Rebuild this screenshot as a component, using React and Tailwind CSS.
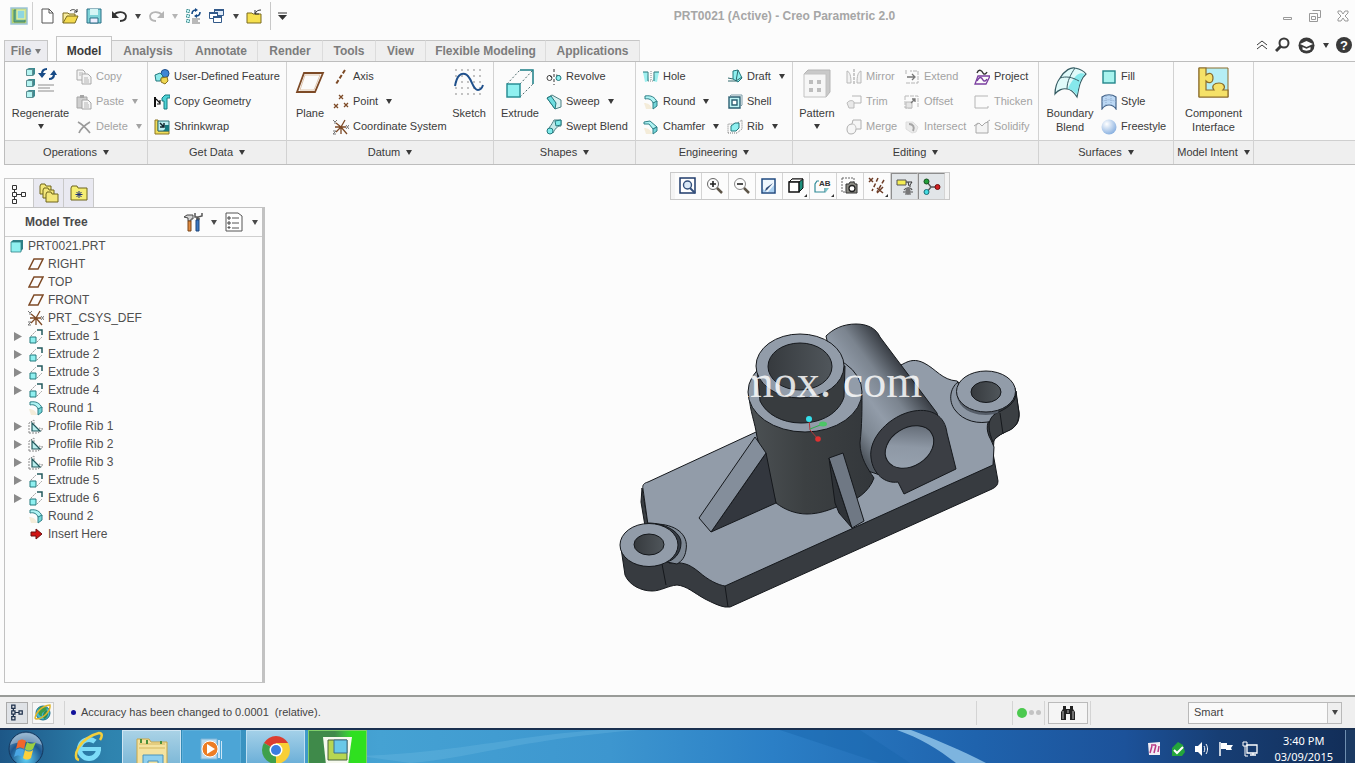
import { useState } from 'react';
import clsx from 'clsx';

/* ---------- shared bits ---------- */

const Svg = ({ w = 16, h = 16, box, children, className }) => (
  <svg
    width={w}
    height={h}
    viewBox={box || `0 0 ${w} ${h}`}
    fill="none"
    className={clsx('shrink-0', className)}
    aria-hidden="true"
  >
    {children}
  </svg>
);

const Caret = ({ className }) => (
  <Svg w={6} h={5} className={className}>
    <path d="M0 0h6L3 5z" fill="currentColor" />
  </Svg>
);

/* ---------- ribbon icons, large ---------- */

const RegenerateIcon = () => (
  <Svg w={32} h={32}>
    {[1, 12, 23].map((y) => (
      <g key={y}>
        <path d={`M2 ${y + 1}l2-1h6v6l-2 2H2z`} fill="#3d8a90" />
        <path d={`M1.500 ${y + 1.500}h6v6h-6z`} fill="#b5f4f2" stroke="#5f8f93" />
      </g>
    ))}
    <path d="M22 2c-4 0-5 2-5 5M24 12c4 0 5-2 5-5" stroke="#164a86" strokeWidth="2.200" />
    <path d="M13 6h8l-4 5zM25 8h7l-3-5z" fill="#164a86" />
    <path d="M13 18h16M13 21h12M13 24h16" stroke="#8d8d8d" />
  </Svg>
);

const PlaneIcon = () => (
  <Svg w={30} h={26}>
    <path d="M9 3h19l-8 19H2z" stroke="#7d4a26" strokeWidth="1.800" />
    <path d="M10 5h15l-6 15H5z" stroke="#d9b99b" strokeWidth="0.800" />
  </Svg>
);

const SketchIcon = () => (
  <Svg w={32} h={32}>
    {[3, 9, 15, 21, 27].map((y) =>
      [3, 9, 15, 21, 27].map((x) => <circle key={`${x}-${y}`} cx={x} cy={y} r="0.900" fill="#a8a8a8" />)
    )}
    <path d="M2 19C4 8 8 6 12 7c7 2 7 16 13 16 3 0 4-2 5-5" stroke="#1e4f8b" strokeWidth="2" />
  </Svg>
);

const ExtrudeIcon = () => (
  <Svg w={32} h={32}>
    <path d="M3 17L16 3M16 17L29 3M16 30l13-13" stroke="#4b6a6c" strokeDasharray="2 2" />
    <path d="M16 3h13v14" stroke="#1b7f86" strokeWidth="1.500" />
    <rect x="3" y="17" width="13" height="13" fill="#8ff0f0" stroke="#2b8f95" strokeWidth="1.500" />
  </Svg>
);

const PatternIcon = () => (
  <Svg w={32} h={32}>
    <path d="M3 7l4-4h22v22l-4 5z" fill="#c9c9c9" stroke="#b5b5b5" />
    <path d="M3 7h22v23H3z" fill="#f6f6f6" stroke="#c2c2c2" />
    <path d="M8 13h4v4H8zM16 13h4v4h-4zM8 21h4v4H8zM16 21h4v4h-4z" fill="#bdbdbd" />
  </Svg>
);

const BlendIcon = () => (
  <Svg w={34} h={32}>
    <path d="M7 11C12 3 18 0 22 1c5 1 9 3 11 6-6 5-7 13-9 23-4-6-7-8-10-8-4-1-9 1-12 5 0-6 2-12 5-16z" fill="#dffafa" stroke="#365c63" strokeWidth="1.200" />
    <path d="M20 13c3-5 7-8 12-6-5 5-6 11-8 21-3-4-6-6-9-6 1-4 3-6 5-9z" fill="#86e8ec" />
    <path d="M7 11c6-2 12-1 19 3M22 1c-4 6-8 13-8 21" stroke="#365c63" />
  </Svg>
);

const ComponentIcon = () => (
  <Svg w={32} h={32}>
    <path d="M1 1h29v29H1z" fill="#b5eef4" stroke="#8b6d2a" />
    <path d="M1 1h7v7c3-3 7-2 7 3s-4 6-7 3v9h8c-3-4 0-7 5-7s7 4 4 7h5v7H1z" fill="#f5e168" stroke="#8b6d2a" strokeWidth="1.200" />
  </Svg>
);

/* ---------- ribbon icons, small ---------- */

const small = {
  copy: (
    <Svg>
      <path d="M1 1h6l2 2v8H1z" fill="#f4f4f4" stroke="#a9a9a9" />
      <path d="M6 5h6l3 3v7H6z" fill="#f4f4f4" stroke="#a9a9a9" />
      <path d="M3 4h4M3 6h2M8 9h4M8 11h5M8 13h5" stroke="#b5b5b5" />
    </Svg>
  ),
  paste: (
    <Svg>
      <path d="M1 3h10v11H1z" fill="#cfcfcf" stroke="#a5a5a5" />
      <path d="M4 1h4v3H4z" fill="#a5a5a5" />
      <path d="M6 6h6l3 3v6H6z" fill="#f6f6f6" stroke="#a5a5a5" />
      <path d="M8 9h4M8 11h5M8 13h5" stroke="#b5b5b5" />
    </Svg>
  ),
  del: (
    <Svg>
      <path d="M2 3c4 2 8 6 12 11M14 3C9 6 5 9 3 14" stroke="#9a9a9a" strokeWidth="1.700" />
    </Svg>
  ),
  udf: (
    <Svg>
      <circle cx="11" cy="4.500" r="4" fill="#3f86d4" stroke="#1d4d88" />
      <path d="M1 6l5-2 3 3-3 5H2z" fill="#8eeaea" stroke="#22787d" />
      <path d="M7 9l6-1 1 4-3 3-4-2z" fill="#f0d851" stroke="#8a7320" />
    </Svg>
  ),
  copyGeom: (
    <Svg>
      <path d="M1 3v10" stroke="#111" strokeWidth="2" />
      <path d="M2 5l4 4M6 6v4H3" stroke="#111" strokeWidth="1.200" />
      <path d="M8 4l3-3h5v3h-3v11h-3V7H8z" fill="#4fd3d6" stroke="#167a80" />
    </Svg>
  ),
  shrink: (
    <Svg>
      <path d="M1 1h3v11h11v3H1z" fill="#f0dd5a" stroke="#8b7522" />
      <path d="M4 2h11v10H4z" fill="#bdeef0" stroke="#2a6f74" />
      <path d="M6 4l4 4M10 4v4H6" stroke="#10262e" strokeWidth="1.500" />
      <path d="M11 6h4v6h-6l2-2z" fill="#167a80" />
    </Svg>
  ),
  axis: (
    <Svg>
      <path d="M12 1L3 15" stroke="#7d4a26" strokeWidth="2" strokeDasharray="4 2" />
    </Svg>
  ),
  point: (
    <Svg>
      <path d="M6 1l4 4M10 1L6 5M1 10l4 4M5 10l-4 4M11 9l4 4M15 9l-4 4" stroke="#7d4a26" strokeWidth="1.300" />
    </Svg>
  ),
  csys: (
    <Svg>
      <path d="M8 8l4-7M8 8L3 4M8 8l6 7M8 8l-5 5M2 8h11M8 8v7" stroke="#7d4a26" strokeWidth="1.300" />
      <path d="M0 1l2 2 2-2M2 3v2M13 6l3 4M16 6l-3 4M0 12h3l-3 3h3" stroke="#777" />
    </Svg>
  ),
  revolve: (
    <Svg>
      <path d="M8 0v16" stroke="#333" strokeDasharray="3 2" />
      <circle cx="3.500" cy="9" r="2.500" stroke="#444" />
      <path d="M3 6l3 3M10 6l4 1" stroke="#444" />
      <circle cx="12.500" cy="9" r="2.500" fill="#8ff0f0" stroke="#22787d" />
    </Svg>
  ),
  sweep: (
    <Svg>
      <path d="M1 4l5-3 9 5v7l-6 2z" fill="#d7f0f0" stroke="#4c7f83" />
      <path d="M1 4l4-2 5 7-1 6z" fill="#6edde0" stroke="#22787d" />
    </Svg>
  ),
  sweptBlend: (
    <Svg>
      <path d="M3 9c3-4 4-6 5-8h7v6c-4 0-6 3-8 7z" fill="#c5e9ea" stroke="#4c7f83" />
      <path d="M9 2l6-1v5l-5 1z" fill="#7feaea" stroke="#22787d" />
      <circle cx="4" cy="12" r="3" fill="#7feaea" stroke="#22787d" />
    </Svg>
  ),
  hole: (
    <Svg>
      <path d="M0 3h4l2 9-4 1zM12 3h4l-2 10-4-1z" fill="#9defef" />
      <path d="M0 3h5v9M16 3h-5v9" stroke="#22787d" />
      <path d="M5 12h6M8 2v9" stroke="#888" strokeDasharray="1 1" />
    </Svg>
  ),
  round: (
    <Svg>
      <path d="M1 9c4 0 7 2 8 6H3z" fill="#f4ecd9" />
      <path d="M2 2c6-1 10 1 12 6l-4 1C9 6 6 4 2 5z" fill="#aef3f3" stroke="#2f8087" />
      <path d="M14 7v5l-4 3V9z" fill="#74d6da" stroke="#2f8087" />
    </Svg>
  ),
  chamfer: (
    <Svg>
      <path d="M1 9c4 0 7 2 8 6H3z" fill="#f4ecd9" />
      <path d="M1 3l6-1 7 6-4 2-4-5H1z" fill="#aef3f3" stroke="#2f8087" />
      <path d="M14 8v4l-4 3v-5z" fill="#74d6da" stroke="#2f8087" />
    </Svg>
  ),
  draft: (
    <Svg>
      <path d="M6 2l5-1 4 8-4 4-5-3z" fill="#8ff0f0" stroke="#22787d" />
      <path d="M1 12h8l6-4M1 9l5 1M9 12l2-11" stroke="#30696d" />
    </Svg>
  ),
  shell: (
    <Svg>
      <path d="M2 3h11v11H2z" fill="#bff5f5" stroke="#2b5f72" strokeWidth="1.400" />
      <path d="M5 6h5v5H5z" fill="#fff" stroke="#2b5f72" strokeWidth="1.400" />
      <path d="M2 3l2-2h11v10l-2 2" stroke="#7c9ca8" />
    </Svg>
  ),
  rib: (
    <Svg>
      <path d="M1 14h9l5-4V1L9 5H1z" stroke="#777" strokeDasharray="1 1" />
      <path d="M4 12V7l4-3h4v5l-3 3z" fill="#8ff0f0" stroke="#22787d" />
    </Svg>
  ),
  mirror: (
    <Svg>
      <path d="M8 0v16" stroke="#999" strokeDasharray="3 1" />
      <path d="M1 2c3 1 4 5 4 12H1zM15 2c-3 1-4 5-4 12h4z" stroke="#b9b9b9" fill="#f2f2f2" />
    </Svg>
  ),
  trim: (
    <Svg>
      <path d="M1 9c2-3 6-3 7-1v6H3z" fill="#e9e9e9" stroke="#bbb" />
      <path d="M6 2h9v7H8" stroke="#b5b5b5" />
    </Svg>
  ),
  merge: (
    <Svg>
      <path d="M7 1h8v9h-5c0 3-2 5-5 5s-4-2-4-5 2-5 5-5z" fill="#f6f6f6" stroke="#b0b0b0" />
      <path d="M6 5c3 0 4 2 4 5" stroke="#c5c5c5" />
    </Svg>
  ),
  extend: (
    <Svg>
      <path d="M2 1v4M2 14h12V2H6" stroke="#b5b5b5" strokeDasharray="4 1" />
      <path d="M3 8h7M8 5l3 3-3 3" stroke="#777" strokeWidth="1.300" />
    </Svg>
  ),
  offset: (
    <Svg>
      <path d="M1 2h13v12M1 2v12h8" stroke="#b9b9b9" strokeDasharray="4 1" />
      <path d="M2 8h6v6H2z" fill="#e5e5e5" stroke="#bbb" />
      <path d="M7 9l4-4M8 5h3v3" stroke="#777" strokeWidth="1.300" />
    </Svg>
  ),
  intersect: (
    <Svg>
      <path d="M2 3h7l5 5-2 5-4 1-6-4z" fill="#ebebeb" stroke="#dedede" />
      <path d="M5 5c4 0 6 3 4 7" stroke="#a5a5a5" strokeWidth="2" />
    </Svg>
  ),
  project: (
    <Svg>
      <path d="M3 4c2-5 5-2 6 0s3 1 4-1" stroke="#333" strokeWidth="1.400" />
      <path d="M4 7h12l-4 8H1z" stroke="#7b3fa0" strokeWidth="1.300" />
      <path d="M3 12c3-6 5-3 6-1s3 1 4-1" stroke="#7b3fa0" strokeWidth="1.500" />
    </Svg>
  ),
  thicken: (
    <Svg>
      <path d="M1 2h13M1 2v12h13M14 12v2" stroke="#b5b5b5" />
    </Svg>
  ),
  solidify: (
    <Svg>
      <path d="M2 14V6l3-2 3 3 3-3 3-1v11z" stroke="#a9a9a9" fill="#f4f4f4" />
      <path d="M0 7l4-3M13 3l3-2" stroke="#a9a9a9" />
    </Svg>
  ),
  fill: (
    <Svg>
      <rect x="2" y="2" width="12" height="12" fill="#a8f3ee" stroke="#23858a" strokeWidth="1.400" />
    </Svg>
  ),
  style: (
    <Svg>
      <path d="M1 3c4-3 10-3 14 0v12c-2-3-4-4-7-4s-5 1-7 4z" fill="#bcd8f4" stroke="#44648a" strokeWidth="1.200" />
      <path d="M5 2v9M10 2v9M1 8c4-3 10-3 14 0" stroke="#8fabcc" strokeDasharray="1 1" />
    </Svg>
  ),
  freestyle: (
    <Svg>
      <defs>
        <radialGradient id="ball" cx="0.350" cy="0.300" r="0.800">
          <stop offset="0" stopColor="#fff" />
          <stop offset="1" stopColor="#7ea9dd" />
        </radialGradient>
      </defs>
      <circle cx="8" cy="8" r="7.500" fill="url(#ball)" />
    </Svg>
  ),
};

/* ---------- ribbon ---------- */

const SmallButton = ({ icon, label, caret, off }) => (
  <button
    type="button"
    disabled={off}
    className={clsx('flex h-[25px] items-center whitespace-nowrap', off ? 'text-[#a3a3a3]' : 'text-[#3a3a3a]')}
  >
    {small[icon]}
    <span className="ml-1">{label}</span>
    {caret && <Caret className="ml-2" />}
  </button>
);

const BigButton = ({ icon, lines, caret, width }) => (
  <button type="button" className={clsx('flex flex-col items-center pt-0.5 text-[#3a3a3a]', width)}>
    <span className="mb-1.5 flex h-[34px] items-center">{icon}</span>
    {lines.map((line) => (
      <span key={line} className="leading-[14px]">{line}</span>
    ))}
    {caret && <Caret className="mt-1" />}
  </button>
);

const Column = ({ items, width }) => (
  <div className={clsx('flex flex-col items-start', width)}>
    {items.map((item) => (
      <SmallButton key={item.label} {...item} />
    ))}
  </div>
);

const Group = ({ title, width, children }) => (
  <section className={clsx('flex shrink-0 flex-col border-r border-[#d2d2d2]', width)}>
    <div className="flex h-[78px] pt-0.5">{children}</div>
    <button
      type="button"
      className="flex h-6 items-center justify-center gap-1.5 whitespace-nowrap border-t border-[#cfcfcf] bg-[#efefef] text-[#3a3a3a]"
    >
      {title}
      <Caret />
    </button>
  </section>
);

const Ribbon = () => (
  <div className="ml-1 flex border-y border-l border-[#bdbdbd] bg-[#fbfbfb] text-[11px]">
    <Group title="Operations" width="w-[143px]">
      <BigButton icon={<RegenerateIcon />} lines={['Regenerate']} caret width="w-[71px]" />
      <Column
        items={[
          { icon: 'copy', label: 'Copy', off: true },
          { icon: 'paste', label: 'Paste', caret: true, off: true },
          { icon: 'del', label: 'Delete', caret: true, off: true },
        ]}
      />
    </Group>
    <Group title="Get Data" width="w-[139px]">
      <Column
        width="pl-1.5"
        items={[
          { icon: 'udf', label: 'User-Defined Feature' },
          { icon: 'copyGeom', label: 'Copy Geometry' },
          { icon: 'shrink', label: 'Shrinkwrap' },
        ]}
      />
    </Group>
    <Group title="Datum" width="w-[207px]">
      <BigButton icon={<PlaneIcon />} lines={['Plane']} width="w-[46px]" />
      <Column
        width="w-[113px]"
        items={[
          { icon: 'axis', label: 'Axis' },
          { icon: 'point', label: 'Point', caret: true },
          { icon: 'csys', label: 'Coordinate System' },
        ]}
      />
      <BigButton icon={<SketchIcon />} lines={['Sketch']} width="w-[46px]" />
    </Group>
    <Group title="Shapes" width="w-[142px]">
      <BigButton icon={<ExtrudeIcon />} lines={['Extrude']} width="w-[52px]" />
      <Column
        items={[
          { icon: 'revolve', label: 'Revolve' },
          { icon: 'sweep', label: 'Sweep', caret: true },
          { icon: 'sweptBlend', label: 'Swept Blend' },
        ]}
      />
    </Group>
    <Group title="Engineering" width="w-[157px]">
      <Column
        width="w-[91px] pl-[7px]"
        items={[
          { icon: 'hole', label: 'Hole' },
          { icon: 'round', label: 'Round', caret: true },
          { icon: 'chamfer', label: 'Chamfer', caret: true },
        ]}
      />
      <Column
        items={[
          { icon: 'draft', label: 'Draft', caret: true },
          { icon: 'shell', label: 'Shell' },
          { icon: 'rib', label: 'Rib', caret: true },
        ]}
      />
    </Group>
    <Group title="Editing" width="w-[246px]">
      <BigButton icon={<PatternIcon />} lines={['Pattern']} caret width="w-[48px]" />
      <Column
        width="w-[63px] pl-[5px]"
        items={[
          { icon: 'mirror', label: 'Mirror', off: true },
          { icon: 'trim', label: 'Trim', off: true },
          { icon: 'merge', label: 'Merge', off: true },
        ]}
      />
      <Column
        width="w-[70px]"
        items={[
          { icon: 'extend', label: 'Extend', off: true },
          { icon: 'offset', label: 'Offset', off: true },
          { icon: 'intersect', label: 'Intersect', off: true },
        ]}
      />
      <Column
        items={[
          { icon: 'project', label: 'Project' },
          { icon: 'thicken', label: 'Thicken', off: true },
          { icon: 'solidify', label: 'Solidify', off: true },
        ]}
      />
    </Group>
    <Group title="Surfaces" width="w-[135px]">
      <BigButton icon={<BlendIcon />} lines={['Boundary', 'Blend']} width="w-[62px]" />
      <Column
        items={[
          { icon: 'fill', label: 'Fill' },
          { icon: 'style', label: 'Style' },
          { icon: 'freestyle', label: 'Freestyle' },
        ]}
      />
    </Group>
    <Group title="Model Intent" width="w-[80px]">
      <BigButton icon={<ComponentIcon />} lines={['Component', 'Interface']} width="w-full" />
    </Group>
    <div className="flex flex-1 flex-col justify-end">
      <div className="h-6 border-t border-[#cfcfcf] bg-[#efefef]" />
    </div>
  </div>
);

/* ---------- title bar ---------- */

const CreoLogo = ({ size = 18 }) => (
  <Svg w={size} h={size} box="0 0 18 18">
    <path d="M1 1h16v16H1z" fill="#b4d36e" stroke="#9cc4d8" strokeWidth="1.500" />
    <path d="M4 3h11v12H4z" fill="#5fa88a" stroke="#4f8a68" />
    <path d="M7 3h8v9H7z" fill="#8fd6e0" stroke="#e2ee9a" strokeWidth="1.500" />
  </Svg>
);

const Tool = ({ label, children }) => (
  <button type="button" aria-label={label} className="flex h-6 items-center justify-center">
    {children}
  </button>
);

const TitleBar = () => (
  <header className="flex h-8 items-center pr-[5px] text-[#444]">
    <div className="flex items-center pl-2.5">
      <CreoLogo />
      <span className="ml-1 mr-1.5 h-7 w-px bg-[#d0d0d0]" />
      <div className="flex items-center gap-[7px]">
        <Tool label="New">
          <Svg>
            <path d="M3 1h7l4 4v10H3z" fill="#fff" stroke="#555" />
            <path d="M10 1v4h4" stroke="#555" />
          </Svg>
        </Tool>
        <Tool label="Open">
          <Svg w={17}>
            <path d="M1 15V5h5l1 1h6v3" fill="#f8eda0" stroke="#7a6a1e" />
            <path d="M1 15l4-7h11l-3 7z" fill="#f3da4f" stroke="#7a6a1e" />
            <path d="M8 3c2-2 5-2 7 1M15 1v3h-3" stroke="#333" />
          </Svg>
        </Tool>
        <Tool label="Save">
          <Svg>
            <path d="M1 1h14v14H1z" fill="#7fd3d8" stroke="#2a6f86" />
            <path d="M4 1h8v6H4z" fill="#d5f5f5" />
            <path d="M4 10h8v5H4z" fill="#eef" stroke="#2a6f86" />
          </Svg>
        </Tool>
        <Tool label="Undo">
          <Svg w={17} className="ml-0.5">
            <path d="M3 7c3-4 11-4 12 1 0 4-3 5-6 5" stroke="#333" strokeWidth="1.800" />
            <path d="M1 3v7h7z" fill="#333" />
          </Svg>
          <Caret className="ml-[7px]" />
        </Tool>
        <Tool label="Redo">
          <Svg w={17}>
            <path d="M14 7C11 3 3 3 2 8c0 4 3 5 6 5" stroke="#b5b5b5" strokeWidth="1.800" />
            <path d="M16 3v7H9z" fill="#b5b5b5" />
          </Svg>
          <Caret className="ml-[7px] text-[#b5b5b5]" />
        </Tool>
        <Tool label="Regenerate model">
          <Svg>
            <path d="M1.500 1.500h3v3h-3zM1.500 6.500h3v3h-3zM1.500 11.500h3v3h-3z" fill="#bff5f5" stroke="#4a9094" strokeDasharray="2 1" />
            <path d="M7 6c0-3 2-4 4-4M15 4c0 3-2 4-4 4" stroke="#164a86" strokeWidth="1.600" />
            <path d="M10 0l3 2-3 2zM12 6l-3 2 3 2z" fill="#164a86" />
            <path d="M7 11h8M7 13h6M7 15h8" stroke="#777" />
          </Svg>
        </Tool>
        <Tool label="Windows">
          <Svg>
            <path d="M6.500 1.500h9v6h-9z" fill="#dfeaf7" stroke="#335a8a" />
            <path d="M1.500 4.500h8v6h-8z" fill="#fff" stroke="#335a8a" />
            <path d="M5.500 8.500h8v6h-8z" fill="#fff" stroke="#335a8a" />
            <path d="M6 2h10M1 5h9M5 9h9" stroke="#335a8a" strokeWidth="2" />
          </Svg>
          <Caret className="ml-[9px]" />
        </Tool>
        <Tool label="Close window">
          <Svg w={17}>
            <path d="M1 15V5h5l1 1h8v9z" fill="#f6e04e" stroke="#7a6a1e" />
            <path d="M9 6c1-3 3-4 6-4M9 2v4h4" stroke="#333" />
          </Svg>
        </Tool>
        <span className="h-7 w-px bg-[#c8c8c8]" />
        <Tool label="Customize">
          <Svg w={9} h={9}>
            <path d="M0 1h9" stroke="#333" />
            <path d="M0 3h9L4.500 8z" fill="#333" />
          </Svg>
        </Tool>
      </div>
    </div>
    <h1 className="flex-1 text-center text-[12px] font-bold text-[#a6a6a6]">PRT0021 (Active) - Creo Parametric 2.0</h1>
    <div className="flex items-center gap-[14px] text-[#999]">
      <Tool label="Minimize">
        <Svg w={12} h={14}>
          <path d="M1.500 8.500h8v2h-8z" stroke="currentColor" />
        </Svg>
      </Tool>
      <Tool label="Restore">
        <Svg w={14} h={14}>
          <path d="M4.500 1.500h8v7h-3M1.500 4.500h8v8h-8z" stroke="currentColor" />
          <path d="M3.500 7.500h4v3h-4z" stroke="currentColor" />
        </Svg>
      </Tool>
      <Tool label="Close">
        <Svg w={14} h={14}>
          <path d="M2 2h3l2 3 2-3h3v2L9 7l3 3v2H9L7 9l-2 3H2v-2l3-3-3-3z" stroke="currentColor" />
        </Svg>
      </Tool>
    </div>
  </header>
);

const TABS = [
  ['Analysis', 'w-[73px]'],
  ['Annotate', 'w-[73px]'],
  ['Render', 'w-[65px]'],
  ['Tools', 'w-[53px]'],
  ['View', 'w-[50px]'],
  ['Flexible Modeling', 'w-[120px]'],
  ['Applications', 'w-[94px]'],
];

const TabRow = () => (
  <nav className="flex h-[29px] items-end justify-between pl-1 pr-[3px] text-[12px] font-bold text-[#7c7c7c]">
    <div className="flex items-end">
      <button type="button" className="mr-2 flex h-[21px] w-11 items-center justify-center gap-1 border border-b-0 border-[#c6c6c6] bg-[#ececf0]">
        File
        <Caret />
      </button>
      <button type="button" className="-mb-px h-[26px] w-14 border border-b-0 border-[#c6c6c6] bg-[#fbfbfb] pt-0.5 text-[#3a3a3a]">
        Model
      </button>
      {TABS.map(([name, width]) => (
        <button
          key={name}
          type="button"
          className={clsx('h-[21px] border-r border-t border-t-[#c6c6c6] border-r-[#dcdcdc] bg-[#efefef]', width)}
        >
          {name}
        </button>
      ))}
    </div>
    <div className="flex h-full items-center gap-[7px] pb-[3px] text-[#3a3a3a]">
      <Tool label="Minimize the ribbon">
        <Svg w={12} h={12}>
          <path d="M1 6l5-4 5 4M1 10l5-4 5 4" stroke="currentColor" />
        </Svg>
      </Tool>
      <Tool label="Command search">
        <Svg>
          <circle cx="9" cy="6" r="4.500" stroke="currentColor" strokeWidth="2" />
          <path d="M6 9l-5 5" stroke="currentColor" strokeWidth="3" />
        </Svg>
      </Tool>
      <Tool label="Learning connector">
        <Svg w={17} h={17}>
          <circle cx="8.500" cy="8.500" r="8" fill="currentColor" />
          <path d="M2 7l6.500-3L15 7l-6.500 3z" fill="#fff" />
          <path d="M4.500 10v2.500c2 1.500 6 1.500 8 0V10l-4 1.800z" fill="#fff" />
        </Svg>
        <Caret className="ml-2" />
      </Tool>
      <button type="button" aria-label="Help" className="flex h-4 w-4 items-center justify-center rounded-full bg-[#3a3a3a] text-[13px] leading-none text-white">
        ?
      </button>
    </div>
  </nav>
);

/* ---------- model tree ---------- */

const treeIcons = {
  part: (
    <Svg w={14} h={14}>
      <path d="M1 3l2-2h10v9l-3 3H1z" fill="#2f8087" />
      <path d="M1 3h10v10H1z" fill="#8ff0f0" stroke="#2f8087" strokeWidth="0.800" />
    </Svg>
  ),
  plane: (
    <Svg>
      <path d="M6 3h9l-5 10H1z" stroke="#7d4a26" strokeWidth="1.500" />
    </Svg>
  ),
  csys: small.csys,
  extrude: (
    <Svg>
      <path d="M3 8l5-5M9 14l5-5" stroke="#999" strokeDasharray="2 1" />
      <path d="M9 2h5v5" stroke="#22595d" strokeWidth="1.500" />
      <path d="M2 9h6v6H2z" fill="#8ff0f0" stroke="#22787d" />
    </Svg>
  ),
  round: small.round,
  rib: (
    <Svg>
      <path d="M1 15h9l5-4-4-1M1 15V5l5-3v4" stroke="#888" strokeDasharray="2 1" />
      <path d="M4 5v8h8z" fill="#b9eeee" stroke="#22595d" strokeWidth="1.200" />
    </Svg>
  ),
  insert: (
    <Svg>
      <path d="M3 6h5V3l6 5-6 5v-3H3z" fill="#d01313" stroke="#6b1010" />
    </Svg>
  ),
};

const TREE = [
  { name: 'RIGHT', icon: 'plane' },
  { name: 'TOP', icon: 'plane' },
  { name: 'FRONT', icon: 'plane' },
  { name: 'PRT_CSYS_DEF', icon: 'csys' },
  { name: 'Extrude 1', icon: 'extrude', open: false },
  { name: 'Extrude 2', icon: 'extrude', open: false },
  { name: 'Extrude 3', icon: 'extrude', open: false },
  { name: 'Extrude 4', icon: 'extrude', open: false },
  { name: 'Round 1', icon: 'round' },
  { name: 'Profile Rib 1', icon: 'rib', open: false },
  { name: 'Profile Rib 2', icon: 'rib', open: false },
  { name: 'Profile Rib 3', icon: 'rib', open: false },
  { name: 'Extrude 5', icon: 'extrude', open: false },
  { name: 'Extrude 6', icon: 'extrude', open: false },
  { name: 'Round 2', icon: 'round' },
  { name: 'Insert Here', icon: 'insert' },
];

const HierarchyIcon = () => (
  <Svg w={16} h={20}>
    <path d="M1.500 1.500h4v4h-4zM1.500 8.500h4v4h-4zM1.500 15.500h4v4h-4zM10.500 8.500h4v4h-4zM3.500 5.500v3M3.500 12.500v3M5.500 10.500h5" stroke="currentColor" />
  </Svg>
);

const ModelTree = () => (
  <aside className="flex w-[265px] shrink-0 flex-col pb-3 pl-1 pt-[13px]">
    <div className="flex">
      <button type="button" aria-label="Model tree" className="-mb-px flex h-[30px] w-[30px] items-center justify-center border border-b-0 border-[#c9c9c9] bg-[#fbfbfb] text-[#333]">
        <HierarchyIcon />
      </button>
      <button type="button" aria-label="Folder browser" className="flex h-[29px] w-[30px] items-center justify-center border-r border-t border-[#c9c9c9] bg-[#e9e9f1]">
        <Svg w={20} h={20}>
          <path d="M1 11V3l1-2h4l1 2h5v8z" fill="#f3e67a" stroke="#6f651d" />
          <path d="M4 15V7l1-2h4l1 2h5v8z" fill="#f3e67a" stroke="#6f651d" />
          <path d="M7 19v-8l1-2h4l1 2h6v8z" fill="#f3e67a" stroke="#6f651d" />
        </Svg>
      </button>
      <button type="button" aria-label="Favorites" className="flex h-[29px] w-[30px] items-center justify-center border-r border-t border-[#c9c9c9] bg-[#e9e9f1]">
        <Svg w={18} h={16}>
          <path d="M1 15V3l1-2h5l1 2h9v12z" fill="#f5ee74" stroke="#6f651d" />
          <path d="M9 6v7M5.500 9.500h7M6.500 7l5 5M11.500 7l-5 5" stroke="#1d2f7a" />
        </Svg>
      </button>
    </div>
    <div className="flex-1 border border-r-[3px] border-[#c2c2c2]">
      <div className="flex h-[29px] items-center border-b border-[#cfcfcf] pl-5 pr-1 text-[#4a4a4a]">
        <h2 className="flex-1 text-[12px] font-bold">Model Tree</h2>
        <button type="button" aria-label="Settings" className="mr-2 flex items-center gap-2">
          <Svg w={20} h={20}>
            <path d="M1 5l3-2h6v4H8v2H5V6z" fill="#d5d5d5" stroke="#444" />
            <path d="M5 9h3v10H5z" fill="#e08b42" stroke="#7a4416" />
            <path d="M12 1v4h2l1 3v-3l4-1V1M13 7h4" stroke="#555" strokeWidth="1.500" />
            <path d="M13 8h3v11h-3z" fill="#3a78c2" stroke="#1d447a" />
          </Svg>
          <Caret />
        </button>
        <button type="button" aria-label="Show" className="flex items-center gap-[9px]">
          <Svg w={18} h={20}>
            <path d="M1 1h12l4 3v15H1z" fill="#fff" stroke="#555" />
            <path d="M3 5h2v2H3zM3 10h2v2H3zM3 15h2v1H3z" stroke="#444" />
            <path d="M7 6h7M7 11h7M7 16h7" stroke="#555" />
          </Svg>
          <Caret />
        </button>
      </div>
      <ul className="text-[12px] text-[#4f4f4f]">
        <li className="flex h-[18px] items-center gap-1 pl-[5px]">
          {treeIcons.part}
          PRT0021.PRT
        </li>
        {TREE.map((node) => (
          <li key={node.name} className="flex h-[18px] items-center pl-[9px]">
            <span className="w-[14px]">
              {node.open === false && (
                <Svg w={8} h={9}>
                  <path d="M0 0l8 4.500L0 9z" fill="#8b8b8b" />
                </Svg>
              )}
            </span>
            {treeIcons[node.icon]}
            <span className="ml-1">{node.name}</span>
          </li>
        ))}
      </ul>
    </div>
  </aside>
);

/* ---------- graphics area ---------- */

const VIEW_TOOLS = [
  {
    label: 'Refit',
    icon: (
      <>
        <path d="M1 1h15v15H1z" fill="#fff" stroke="#1f3b6b" strokeWidth="1.500" />
        <circle cx="8.500" cy="8" r="4" fill="#dbe9f7" stroke="#34507c" strokeWidth="1.400" />
        <path d="M11 11l5 5" stroke="#34507c" strokeWidth="2" />
      </>
    ),
  },
  {
    label: 'Zoom in',
    icon: (
      <>
        <circle cx="7" cy="7" r="5.500" stroke="#666" />
        <path d="M4 7h6M7 4v6" stroke="#222" strokeWidth="1.600" />
        <path d="M11 11l5 5" stroke="#5d5548" strokeWidth="2.500" />
      </>
    ),
  },
  {
    label: 'Zoom out',
    icon: (
      <>
        <circle cx="7" cy="7" r="5.500" stroke="#888" />
        <path d="M4 7h6" stroke="#222" strokeWidth="1.600" />
        <path d="M11 11l5 5" stroke="#5d5548" strokeWidth="2.500" />
      </>
    ),
  },
  {
    label: 'Repaint',
    icon: (
      <>
        <path d="M2 2h13v14H2z" fill="#eef6fd" stroke="#1f4a80" strokeWidth="1.500" />
        <path d="M3 15v-3l4 3zM14 8v7H8z" fill="#a9cff0" />
        <path d="M13 6l-6 7-2 1 1-3z" fill="#34507c" />
      </>
    ),
  },
  {
    label: 'Display style',
    more: true,
    icon: (
      <>
        <path d="M2 5l3-3h11v9l-4 4z" fill="#1d8f7c" stroke="#111" />
        <path d="M2 5l3-3h11l-4 3z" fill="#fff" stroke="#111" />
        <path d="M2 5h10v10H2z" fill="#fff" stroke="#111" strokeWidth="1.500" />
      </>
    ),
  },
  {
    label: 'Saved orientations',
    more: true,
    icon: (
      <>
        <path d="M5 4H3L1 7v8h10v-4" stroke="#2f8a96" strokeWidth="1.200" />
        <text x="5" y="9" fontSize="8" fontWeight="bold" fontFamily="Liberation Sans, sans-serif" fill="#333">AB</text>
        <path d="M12 11h3l-3 4z" fill="#7ac8d0" />
      </>
    ),
  },
  {
    label: 'View manager',
    icon: (
      <>
        <path d="M1 1h12v4M1 1v14h3" stroke="#666" strokeDasharray="2 1" />
        <path d="M5 7h3l1-2h4l1 2h2v9H5z" fill="#8b8b84" stroke="#333" />
        <circle cx="11" cy="11.500" r="3" fill="#fff" stroke="#222" strokeWidth="1.300" />
      </>
    ),
  },
  {
    label: 'Datum display filters',
    more: true,
    icon: (
      <>
        <path d="M1 1l4 4M5 1L1 5M9 11l6 5M15 10l-6 6" stroke="#6d3c26" strokeWidth="1.500" />
        <path d="M10 1L4 14M16 3l-7 12" stroke="#6d3c26" strokeWidth="1.500" strokeDasharray="4 2" />
      </>
    ),
  },
  {
    label: 'Annotation display',
    pressed: true,
    icon: (
      <>
        <path d="M1 2h9v5H1z" fill="#f5ee54" stroke="#555" />
        <path d="M10 4h6l-2 3v2M12 4l1 4" stroke="#333" />
        <path d="M8 12c2-3 7-3 8 0M7 14h10M9 16h6" stroke="#555" strokeWidth="1.200" />
        <ellipse cx="12" cy="13" rx="2.500" ry="3.500" fill="#777" />
      </>
    ),
  },
  {
    label: 'Spin center',
    pressed: true,
    icon: (
      <>
        <path d="M4 4l4 5-4 5M8 9h6" stroke="#555" strokeWidth="1.300" />
        <circle cx="3.500" cy="3.500" r="2.500" fill="#22a03a" stroke="#134d1d" />
        <circle cx="3.500" cy="14" r="2.500" fill="#44dbe2" stroke="#1c6c76" />
        <circle cx="14.500" cy="9" r="2.500" fill="#d32121" stroke="#6f1212" />
      </>
    ),
  },
];

const ViewToolbar = () => (
  <div className="flex h-7 items-center border border-[#c9c9c9] bg-[#f4f4f4] px-1">
    {VIEW_TOOLS.map(({ label, icon, pressed, more }) => (
      <button
        key={label}
        type="button"
        aria-label={label}
        className={clsx(
          'relative flex h-[26px] w-[27px] shrink-0 items-center justify-center border-r',
          pressed ? 'border-l border-t border-l-[#8d8d8d] border-r-[#d4d4d4] border-t-[#8d8d8d] bg-[#e1e5e8]' : 'border-[#d4d4d4] bg-[#fcfcfc]'
        )}
      >
        <Svg w={18} h={18}>{icon}</Svg>
        {more && (
          <Svg w={3} h={3} className="absolute bottom-0.5 right-0.5">
            <path d="M3 0v3H0z" fill="#333" />
          </Svg>
        )}
      </button>
    ))}
  </div>
);

const Part = () => (
  <svg width="440" height="290" viewBox="590 320 440 290" fill="none" className="shrink-0" role="img" aria-label="Part model">
    <defs>
      <linearGradient id="tube" gradientUnits="userSpaceOnUse" x1="866" y1="461" x2="936" y2="409">
        <stop offset="0" stopColor="#4f565e" />
        <stop offset="0.200" stopColor="#7d8792" />
        <stop offset="0.450" stopColor="#929ca9" />
        <stop offset="0.700" stopColor="#7b848f" />
        <stop offset="0.900" stopColor="#4c525a" />
        <stop offset="1" stopColor="#353940" />
      </linearGradient>
      <linearGradient id="body" x1="0" y1="0" x2="1" y2="0">
        <stop offset="0" stopColor="#4c5154" />
        <stop offset="0.450" stopColor="#3c4042" />
        <stop offset="1" stopColor="#33373b" />
      </linearGradient>
      <linearGradient id="bore" x1="0" y1="0" x2="1" y2="0">
        <stop offset="0" stopColor="#363a3e" />
        <stop offset="1" stopColor="#50565b" />
      </linearGradient>
      <linearGradient id="pin" x1="0" y1="1" x2="1" y2="0">
        <stop offset="0" stopColor="#9aa5b2" />
        <stop offset="0.500" stopColor="#8e98a5" />
        <stop offset="1" stopColor="#555c66" />
      </linearGradient>
    </defs>
    <g stroke="#15181c" strokeWidth="1" strokeLinejoin="round">
      {/* side walls of the base */}
      <path d="M642 488l6 35-3 3-4-24z" fill="#3a3e43" />
      <path d="M621 548l4 27c4 10 16 16 27 16 9 0 15-5 25-6 10 1 17 8 28 14 8 4 14 7 20 8h5l262-118c4-2 6-4 6-8l-5-28 1-13c5-6 12-8 17-11 6-3 9-9 8-17l-4-24-30 10-22 50-240 120-50-20-50-10z" fill="#373b40" />
      {/* top of the base */}
      <path d="M643 489c-1-4 1-6 5-7l255-118c7-4 13-5 21-1 12 6 18 17 33 18l38 32c-9 7-10 17-4 27l3 7-1 18-268 121c-7-1-17-6-26-14-11-9-17-10-30-9l-21-38z" fill="#929ca9" />
      <path d="M725 586l3 21M662 564l4 21" />
      {/* left boss */}
      <path d="M655 524c20 0 34 10 31 26-1 7-4 11-9 14l-15-3z" fill="#7e8894" />
      <path d="M648 523c17 0 33 9 33 20 0 11-8 18-15 19z" fill="#343a43" />
      <ellipse cx="649" cy="545" rx="29" ry="21.500" fill="#929ca9" />
      <ellipse cx="649" cy="544.500" rx="15" ry="10.500" fill="url(#bore)" />
      {/* right boss */}
      <path d="M958 382c-8 6-10 19-3 28 8 11 24 15 37 11l4-11-34-8z" fill="#8b95a2" />
      <path d="M989 426c0-7 4-12 10-14 12-6 18-12 17-21l3 22c0 8-3 14-9 17-6 3-13 5-17 12-2-5-4-10-4-16z" fill="#3b3f43" />
      <path d="M1000 413l3 21" />
      <path d="M958 392c0 12 9 19 21 21 8 1 15 0 19-2" stroke="#555d68" strokeWidth="3" />
      <ellipse cx="986" cy="391.500" rx="29.500" ry="20.500" fill="#929ca9" />
      <ellipse cx="986" cy="392" rx="15" ry="10.500" fill="url(#bore)" />
      {/* cross tube */}
      <path d="M826 336c7-7 17-12 30-12 11 0 20 4 24 13l57 76 4 20-55 44-24-8-25-83z" fill="url(#tube)" />
      <path d="M871 458c-3-20 19-43 43-47 18-3 31 5 33 22l9 36-52 25-6-12c-13 2-25-8-27-24z" fill="#3b3e44" />
      <ellipse cx="909.500" cy="447" rx="26" ry="19" transform="rotate(-32 909.500 447)" fill="url(#pin)" />
      {/* main hub */}
      <path d="M749 395c1 17 6 27 8 42l19 66c9 7 20 11 31 11 12 0 23-4 34-9 15-4 28-13 33-27-6-9-14-20-14-35 2-18 2-34 2-48z" fill="url(#body)" />
      <ellipse cx="805" cy="392" rx="57" ry="40" fill="#929ca9" />
      <path d="M757 368l3 33c6 13 22 22 41 22 21 0 38-10 43-26l1-31z" fill="#383c3f" />
      <ellipse cx="800" cy="366" rx="44" ry="32" fill="#929ca9" />
      <ellipse cx="800" cy="366.500" rx="32" ry="23.500" fill="url(#bore)" />
      {/* ribs */}
      <path d="M766 453l10 50-65 29z" fill="#33373e" />
      <path d="M755 437l11 16-55 79-12-14z" fill="#848e9b" />
      <path d="M829 458l6 45 4 10 13 15z" fill="#2f3338" />
      <path d="M829 458l14-5 21 68-12 7z" fill="#6f7884" />
    </g>
    <text x="738" y="397" fontSize="46" fontFamily="Liberation Serif, serif" fill="#fcfcfc" fillOpacity="0.850">mox. com</text>
    {/* spin center */}
    <path d="M809 419l1 11 8 9" stroke="#b23a3a" />
    <path d="M810 429l13-5" stroke="#2fae4d" />
    <circle cx="809" cy="419" r="3" fill="#35e0ec" />
    <ellipse cx="823" cy="424" rx="4" ry="2.500" fill="#4cc566" />
    <circle cx="818" cy="439" r="2.800" fill="#e03131" />
  </svg>
);

/* ---------- status bar ---------- */

const StatusBar = () => {
  const [filter, setFilter] = useState('Smart');

  return (
    <div className="flex h-[33px] shrink-0 items-center border-t-2 border-[#999b98] bg-[#efefef] pl-1.5 pr-[13px] text-[11px] text-[#444]">
      <button type="button" aria-label="Toggle navigator" className="flex h-[22px] w-[22px] items-center justify-center border border-[#aaa] bg-[#dfe2e6] text-[#1d2f4a]">
        <Svg w={14} h={17} box="1 0 16 21">
          <path d="M2.500 1.500h4v4h-4zM2.500 8.500h4v4h-4zM2.500 15.500h4v4h-4zM11.500 8.500h4v4h-4zM4.500 5.500v3M4.500 12.500v3M6.500 10.500h5" stroke="currentColor" strokeWidth="1.500" />
        </Svg>
      </button>
      <button type="button" aria-label="Toggle browser" className="ml-1 flex h-[22px] w-[22px] items-center justify-center border border-[#ccc] bg-[#f7f7f7]">
        <Svg w={18} h={18}>
          <circle cx="9" cy="9" r="7" fill="#45b8d0" stroke="#1d6f8a" />
          <path d="M5 4c4-3 7-1 8 1-2 3-6 3-5 7-3 1-5-4-3-8z" fill="#3d9c4a" />
          <path d="M12 6c3 1 3 6-1 9-3 0-3-6 1-9z" fill="#2f8a55" />
          <path d="M1 14C2 8 8 2 16 1c1 6-7 14-14 14z" stroke="#dfb52b" strokeWidth="1.500" />
        </Svg>
      </button>
      <span className="ml-2.5 mr-1.5 h-6 w-px bg-[#d4d4d4]" />
      <span className="h-[5px] w-[5px] rounded-full bg-[#12129a]" />
      <p className="ml-[5px] flex-1 whitespace-pre">Accuracy has been changed to 0.0001  (relative).</p>
      <span className="mr-[35px] h-6 w-px bg-[#d4d4d4]" />
      <span className="mr-1 h-6 w-px bg-[#d4d4d4]" />
      <span className="flex items-center gap-0.5">
        <span className="h-2.5 w-2.5 rounded-full bg-[#4cc94f]" />
        <span className="h-[5px] w-[5px] rounded-full bg-[#c3c3c3]" />
        <span className="h-[5px] w-[5px] rounded-full bg-[#c3c3c3]" />
      </span>
      <span className="mx-[3px] h-6 w-px bg-[#d4d4d4]" />
      <button type="button" aria-label="Find" className="flex h-[22px] w-10 items-center justify-center border border-[#bbb] bg-[#f5f5f5]">
        <Svg w={18} h={16}>
          <path d="M4 1h3v3h4V1h3v3l2 3v8h-5V9H7v6H2V7l2-3z" fill="#222" />
          <path d="M4 6v8M14 6v8M9 5v3" stroke="#bbb" />
        </Svg>
      </button>
      <span className="ml-0.5 mr-[97px] h-6 w-px bg-[#d4d4d4]" />
      <div className="relative flex h-[22px] w-[154px] border border-[#b9b9b9] bg-[#fafafa]">
        <select
          aria-label="Selection filter"
          value={filter}
          onChange={(e) => setFilter(e.target.value)}
          className="w-full appearance-none bg-transparent pl-[5px] outline-none"
        >
          <option>Smart</option>
          <option>Geometry</option>
          <option>Features</option>
        </select>
        <span className="pointer-events-none absolute inset-y-0 right-0 flex w-[14px] items-center justify-center border-l border-[#c4c4c4] bg-[#efefef]">
          <Caret />
        </span>
      </div>
    </div>
  );
};

/* ---------- windows taskbar ---------- */

const TaskButton = ({ label, tone, children }) => (
  <button type="button" aria-label={label} className={clsx('flex h-full w-[59px] shrink-0 items-start justify-center border border-b-0 pt-1', tone)}>
    {children}
  </button>
);

const Taskbar = () => (
  <footer className="relative h-[35px] shrink-0 overflow-hidden border-t-2 border-[#1a3050] bg-[#2b82c6] font-['Noto_Sans',sans-serif]">
    <svg className="absolute inset-0 h-full w-full" viewBox="0 0 1355 33" preserveAspectRatio="none" aria-hidden="true">
      <defs>
        <linearGradient id="sky" x1="0" y1="0" x2="1" y2="0">
          <stop offset="0" stopColor="#1d5787" />
          <stop offset="0.080" stopColor="#2e83ae" />
          <stop offset="0.280" stopColor="#45a2d3" />
          <stop offset="0.450" stopColor="#3d96cf" />
          <stop offset="0.570" stopColor="#2b7fc6" />
          <stop offset="0.720" stopColor="#1f63ad" />
          <stop offset="0.830" stopColor="#1c529a" />
          <stop offset="0.900" stopColor="#173e74" />
          <stop offset="1" stopColor="#122d57" />
        </linearGradient>
      </defs>
      <path d="M0 0h1355v33H0z" fill="url(#sky)" />
      <path d="M410 33c60-5 120-25 230-33h-40c-80 5-140 22-240 26z" fill="#7cc3e8" fillOpacity="0.250" />
      <path d="M880 33L780 0h80l50 33z" fill="#1764ab" fillOpacity="0.400" />
      <path d="M897 0h14c26 10 50 20 75 33h-30c-18-14-36-25-59-33z" fill="#a5d6f3" fillOpacity="0.700" />
    </svg>
    <div className="relative flex h-full">
      <button type="button" aria-label="Start" className="ml-2 mr-[29px] shrink-0">
        <Svg w={36} h={36}>
          <defs>
            <radialGradient id="orb" cx="0.500" cy="0.800" r="0.800">
              <stop offset="0" stopColor="#5fd0f5" />
              <stop offset="0.600" stopColor="#1c578f" />
              <stop offset="1" stopColor="#6f9cc0" />
            </radialGradient>
          </defs>
          <circle cx="18" cy="19" r="17" fill="url(#orb)" stroke="#14365c" />
          <path d="M2 15c4-16 28-16 32 0-8-4-24-4-32 0z" fill="#fff" fillOpacity="0.350" />
          <path d="M10 11c3-2 5-2 8 0l-2 8c-3-2-5-2-8 0z" fill="#f0672c" />
          <path d="M19 12c3 2 5 2 9 0l-3 7c-3 2-5 2-8 0z" fill="#9bcf43" />
          <path d="M8 20c3-2 5-2 8 0l-2 7c-3-2-5-2-8 0z" fill="#4aa6e4" />
          <path d="M17 20c3 2 5 2 8 0l-2 8c-3 2-5 2-8 0z" fill="#fbd03c" />
        </Svg>
      </button>
      <button type="button" aria-label="Internet Explorer" className="mr-[17px] shrink-0">
        <Svg w={32} h={32}>
          <circle cx="16" cy="18" r="9.500" stroke="#7ddcf8" strokeWidth="5" strokeDasharray="51 9" />
          <path d="M8 18h20" stroke="#7ddcf8" strokeWidth="4" />
          <path d="M6 29C-2 27 6 7 26 2c4 0 3 4 1 7" stroke="#f2cf3c" strokeWidth="2.500" />
        </Svg>
      </button>
      <TaskButton label="File Explorer" tone="border-[#cfe6f4] bg-linear-to-b from-[#a9d2e6] to-[#7fb9d8]">
        <Svg w={34} h={32}>
          <path d="M2 4h12l2 3h16v22H2z" fill="#f4e3a1" stroke="#c7a649" />
          <path d="M4 9h26M4 13h26" stroke="#d4b75e" />
          <path d="M6 4v4M12 5v4M26 6v3" stroke="#4b8f3a" strokeWidth="2" />
          <path d="M8 32V20h20v12h-5v-6H13v6z" fill="#8fd0ef" stroke="#4b93bd" />
        </Svg>
      </TaskButton>
      <TaskButton label="Media Player" tone="mx-px border-[#5fb0da] bg-[#4ca5d6]">
        <Svg w={28} h={30}>
          <path d="M3 4h16v20H3z" fill="#b9daf0" stroke="#7fb5d8" />
          <path d="M20 5h2v18h-2zM23 6h1v18h-1z" fill="#cde6f6" />
          <circle cx="12" cy="14" r="8" fill="#ed7d25" stroke="#fff" />
          <path d="M9 9l8 5-8 5z" fill="#fff" />
        </Svg>
      </TaskButton>
      <TaskButton label="Chrome" tone="ml-1 border-[#bfe0f2] bg-linear-to-b from-[#a3d0e8] to-[#6db0d8]">
        <Svg w={30} h={30}>
          <path d="M15 15L2.900 8A14 14 0 0 1 27.100 8z" fill="#dc3d2f" />
          <path d="M15 15L2.900 8A14 14 0 0 0 15 29z" fill="#3fa04b" />
          <path d="M15 15L15 29A14 14 0 0 0 27.100 8H15z" fill="#f8cf35" />
          <circle cx="15" cy="15" r="6.500" fill="#fff" />
          <circle cx="15" cy="15" r="5" fill="#3b7de0" />
        </Svg>
      </TaskButton>
      <TaskButton label="Creo Parametric" tone="ml-[3px] border-[#7fcf6a] bg-linear-to-r from-[#3f8a4a] from-45% to-[#2fe01f] to-75%">
        <Svg w={32} h={32}>
          <path d="M1 2h29l-4 28H4z" fill="#f6f9ee" />
          <path d="M6 5h19v20H6z" fill="#b7d651" stroke="#49633a" />
          <path d="M12 5h13v13H12z" fill="#69c8e8" stroke="#3d6f8a" />
        </Svg>
      </TaskButton>
      <div className="flex flex-1 items-center justify-end gap-2 pt-1 text-white">
        <Svg>
          <path d="M2 2l12-1v13H3z" fill="#f3eef5" />
          <path d="M4 12l2-7M8 12l2-8M12 11l1-6M5 4h5" stroke="#b83a86" strokeWidth="1.500" />
        </Svg>
        <Svg>
          <path d="M2 7l6-6 5 3 2 7-3 4H2z" fill="#24a53b" />
          <path d="M4 9l3 3 6-6" stroke="#fff" strokeWidth="2" />
        </Svg>
        <Svg>
          <path d="M1 5h3l4-4v14l-4-4H1z" fill="#fff" />
          <path d="M10 5c1 2 1 4 0 6M12 3c2 3 2 7 0 10" stroke="#fff" />
        </Svg>
        <Svg>
          <path d="M2 1v14" stroke="#fff" strokeWidth="1.500" />
          <path d="M3 2h6v2h6l-2 3 1 2H8V8H3z" fill="#fff" />
        </Svg>
        <Svg>
          <path d="M5 4h10v8H5zM8 14h6M11 12v2" stroke="#fff" strokeWidth="1.300" />
          <path d="M1 1h4v4H1zM3 5v10h3" stroke="#fff" />
        </Svg>
      </div>
      <time className="ml-4 mr-3 pt-[3px] text-center text-[11px] leading-4 text-white">
        3:40 PM
        <br />
        03/09/2015
      </time>
      <span className="h-full w-2.5 shrink-0 border-l border-[#6f8fb0] bg-[#1b3a63]" />
    </div>
  </footer>
);

/* ---------- page ---------- */

const App = () => (
  <div className="flex h-screen flex-col overflow-hidden bg-[#fcfcfc] font-['Liberation_Sans',Arial,sans-serif]">
    <TitleBar />
    <TabRow />
    <Ribbon />
    <main className="flex min-h-0 flex-1">
      <ModelTree />
      <section className="flex flex-1 flex-col items-center gap-[120px] pt-[7px]">
        <ViewToolbar />
        <Part />
      </section>
    </main>
    <StatusBar />
    <Taskbar />
  </div>
);

export default App;
